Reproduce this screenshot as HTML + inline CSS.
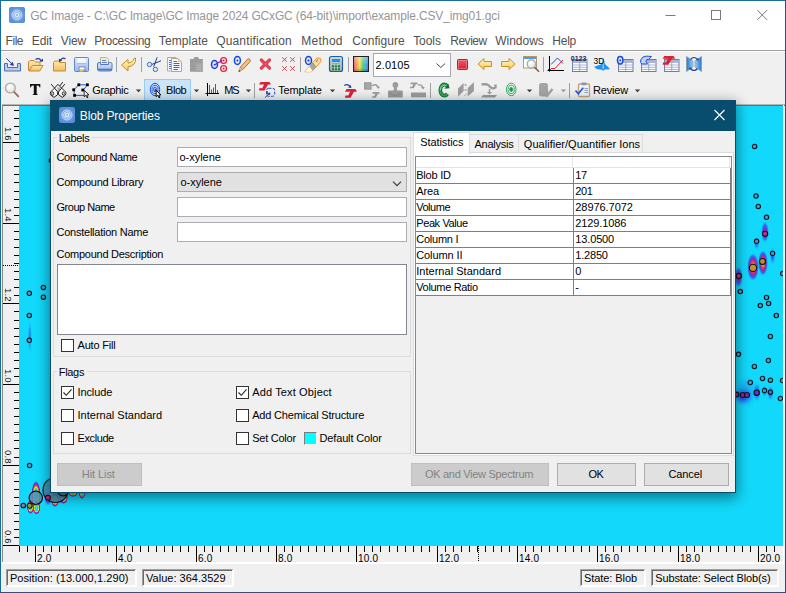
<!DOCTYPE html>
<html>
<head>
<meta charset="utf-8">
<title>GC Image</title>
<style>
*{box-sizing:border-box;margin:0;padding:0}
html,body{width:786px;height:593px;overflow:hidden;background:#f0f0f0}
body{font-family:"Liberation Sans",sans-serif;font-size:11px;color:#000;position:relative}
div,svg{position:absolute}
.t{white-space:nowrap}
.inp{background:#fff;border:1px solid #abadb3}
.cb{width:13px;height:13px;background:#fff;border:1px solid #333}
.btn{height:23px;border:1px solid #adadad;background:#e1e1e1}
.btn.dis{background:#cccccc;border-color:#bfbfbf}
.sep{width:2px;height:20px;border-left:1px solid #a0a0a0;border-right:1px solid #fff}
.st{height:18px;border:1px solid;border-width:1px 2px 2px 1px;border-color:#a0a0a0 #fff #fff #a0a0a0;box-shadow:inset 1px 1px 0 #696969}
</style>
</head>
<body>
<div style="left:0;top:0;width:786px;height:593px;background:#f0f0f0"></div>
<div style="left:0;top:0;width:786px;height:50px;background:#fff"></div>
<div style="left:0;top:0;width:786px;height:593px;border:1px solid;border-color:#166d9e #17589a #17589a #166d9e"></div>
<div class="t" style="left:30.2px;top:10px;font-size:12px;line-height:13.79px;letter-spacing:-0.15px;color:#969696;">GC Image - C:\GC Image\GC Image 2024 GCxGC (64-bit)\import\example.CSV_img01.gci</div>
<div class="t" style="left:5.5px;top:35px;font-size:12px;line-height:13.79px;letter-spacing:-0.43px;color:#505050;">File</div>
<div class="t" style="left:31.8px;top:35px;font-size:12px;line-height:13.79px;letter-spacing:-0.17px;color:#505050;">Edit</div>
<div class="t" style="left:60.8px;top:35px;font-size:12px;line-height:13.79px;letter-spacing:-0.12px;color:#505050;">View</div>
<div class="t" style="left:94.2px;top:35px;font-size:12px;line-height:13.79px;letter-spacing:-0.32px;color:#505050;">Processing</div>
<div class="t" style="left:158.8px;top:35px;font-size:12px;line-height:13.79px;letter-spacing:0.08px;color:#505050;">Template</div>
<div class="t" style="left:216.2px;top:35px;font-size:12px;line-height:13.79px;letter-spacing:0.16px;color:#505050;">Quantification</div>
<div class="t" style="left:301.2px;top:35px;font-size:12px;line-height:13.79px;letter-spacing:0.26px;color:#505050;">Method</div>
<div class="t" style="left:352.2px;top:35px;font-size:12px;line-height:13.79px;letter-spacing:0.06px;color:#505050;">Configure</div>
<div class="t" style="left:413.2px;top:35px;font-size:12px;line-height:13.79px;letter-spacing:-0.08px;color:#505050;">Tools</div>
<div class="t" style="left:450.2px;top:35px;font-size:12px;line-height:13.79px;letter-spacing:-0.46px;color:#505050;">Review</div>
<div class="t" style="left:495.2px;top:35px;font-size:12px;line-height:13.79px;letter-spacing:-0.01px;color:#505050;">Windows</div>
<div class="t" style="left:552.2px;top:35px;font-size:12px;line-height:13.79px;letter-spacing:-0.19px;color:#505050;">Help</div>
<svg style="left:660px;top:0" width="126" height="31" viewBox="0 0 126 31"><g stroke="#7a7a7a" stroke-width="1" fill="none"><path d="M5.5 15.5h10"/><rect x="51.5" y="10.5" width="9" height="9"/><path d="M97.200 10l10 10M107.200 10l-10 10"/></g></svg>
<div style="left:1px;top:50px;width:784px;height:1px;background:#a0a0a0"></div>
<div style="left:1px;top:51px;width:784px;height:1px;background:#fff"></div>
<svg style="left:0;top:52px" width="786" height="53" viewBox="0 52 786 53"><defs>
<linearGradient id="fold" x1="0" y1="0" x2="0" y2="1"><stop offset="0" stop-color="#fde9b0"/><stop offset="1" stop-color="#f3bd5e"/></linearGradient>
<linearGradient id="blu" x1="0" y1="0" x2="0" y2="1"><stop offset="0" stop-color="#dde8f8"/><stop offset="1" stop-color="#9bb8e4"/></linearGradient>
<linearGradient id="yel" x1="0" y1="0" x2="0" y2="1"><stop offset="0" stop-color="#fef6d4"/><stop offset="1" stop-color="#f8cc58"/></linearGradient>
<linearGradient id="rain" x1="0" y1="0" x2="1" y2="0"><stop offset="0" stop-color="#e8607c"/><stop offset=".22" stop-color="#f2a058"/><stop offset=".42" stop-color="#f2e050"/><stop offset=".62" stop-color="#58d070"/><stop offset=".8" stop-color="#48b0e8"/><stop offset="1" stop-color="#4878e8"/></linearGradient>
<linearGradient id="rainv" x1="0" y1="0" x2="0" y2="1"><stop offset="0" stop-color="#fff" stop-opacity=".35"/><stop offset=".6" stop-color="#fff" stop-opacity="0"/><stop offset="1" stop-color="#000" stop-opacity=".25"/></linearGradient>
<linearGradient id="redg" x1="0" y1="0" x2="0" y2="1"><stop offset="0" stop-color="#f0606c"/><stop offset="1" stop-color="#d81830"/></linearGradient>
<linearGradient id="flipL" x1="0" y1="0" x2="1" y2="0"><stop offset="0" stop-color="#1f78cc"/><stop offset="1" stop-color="#9ed0f4"/></linearGradient>
<linearGradient id="flipR" x1="1" y1="0" x2="0" y2="0"><stop offset="0" stop-color="#1f78cc"/><stop offset="1" stop-color="#9ed0f4"/></linearGradient>
<radialGradient id="lens" cx="40%" cy="35%" r="70%"><stop offset="0" stop-color="#fff"/><stop offset="1" stop-color="#d4e2ee"/></radialGradient>
<linearGradient id="calc" x1="0" y1="0" x2="0" y2="1"><stop offset="0" stop-color="#c8d8e0"/><stop offset="1" stop-color="#9cb0a8"/></linearGradient>
</defs><path d="M4.500 63.500h3v4h10v-4h3v7.500h-16z" fill="#bccbea" stroke="#4c6eb4" stroke-width="1"/><path d="M6.300 58.300l6.500 6.500" stroke="#2c44a4" stroke-width="1"/><path d="M14 66l-4.300-1.300 3-3z" fill="#2438a0"/><path d="M28.500 70.500v-8.500l1.500-1.500h4l1.500 1.500h4.500v3" fill="url(#fold)" stroke="#c48838" stroke-width="1"/><path d="M29 71l3.500-5.500h10.500l-3.200 5.500z" fill="url(#fold)" stroke="#c48838" stroke-width="1"/><path d="M35.500 59.500q3.500-2.500 6 1.800" fill="none" stroke="#1f3f8f" stroke-width="1.300"/><path d="M39.500 61.500h3.500v-3z" fill="#1f3f8f"/><path d="M53.500 62.500l1.200-1.500h4l1.300 1.500h5.500v8.500h-12z" fill="url(#fold)" stroke="#c48838" stroke-width="1"/><path d="M65.500 59q-3.300-2.200-5.300 1.600" fill="none" stroke="#1f3f8f" stroke-width="1.300"/><path d="M58.800 58.600l3.200 1.700-2.800 2.200z" fill="#1f3f8f"/><path d="M74.500 58.500q0-1 1-1h12q1 0 1 1v12q0 1-1 1h-12q-1 0-1-1z" fill="url(#blu)" stroke="#6486c2" stroke-width="1"/><rect x="77" y="58" width="9" height="6" fill="#f2f6fc"/><rect x="77" y="63" width="9" height="1" fill="#e8b060"/><rect x="78.500" y="66.500" width="7" height="5" fill="#6a8cc8"/><rect x="79.500" y="67.500" width="5" height="2" fill="#fff"/><rect x="79.500" y="69.500" width="4" height="2" fill="#e8d070"/><path d="M100.500 65v-7.500h6l2 2v5.500z" fill="#f4ead4" stroke="#c8b488" stroke-width="1"/><path d="M102 60.500h4M102 62.500h5" stroke="#5a82c4" stroke-width="1"/><path d="M97.500 64q0-1.500 1.500-1.500h1.500v2h8v-2h2q1.500 0 1.500 1.500v5q0 2-2 2h-10.500q-2 0-2-2z" fill="url(#blu)" stroke="#4f78c0" stroke-width="1"/><path d="M98 69.500h14" stroke="#4f78c0" stroke-width="1.500"/><path d="M121.500 65l6.500-5.500v3.500q4.500 0 6-4.500l1.500-0.500q1 7.500-7.500 9v4z" fill="url(#yel)" stroke="#c8901e" stroke-width="1" stroke-linejoin="round"/><path d="M157.200 57.300l-3.600 9.500M161 60.800l-9.600 3.800" stroke="#2a3a78" stroke-width="1" fill="none"/><circle cx="149.500" cy="64.500" r="2.200" fill="#d8e8f8" stroke="#3474c4" stroke-width="1"/><circle cx="155.400" cy="69.400" r="2.200" fill="#d8e8f8" stroke="#3474c4" stroke-width="1"/><path d="M167.500 57.500h8.500v13.500h-8.500z" fill="#fbf8ee" stroke="#c4ac74" stroke-width="1"/><path d="M169 60.500h3M169 62.500h3M169 64.500h3M169 66.500h3M169 68.500h3" stroke="#5070b8" stroke-width="1"/><path d="M171.500 58.500h6.500l3.500 3.500v9.500h-10z" fill="#f4f7fd" stroke="#b8a680" stroke-width="1"/><path d="M178 58.500v3.500h3.500z" fill="#e8c878"/><path d="M173.500 61.500h3.500M173.500 63.500h6M173.500 65.500h6M173.500 67.500h6M173.500 69.500h4.500" stroke="#4868b0" stroke-width="1"/><path d="M190 59h3.500l1-2h3.500l1 2h3.800v12.800h-12.800z" fill="#9c9c9c"/><rect x="195.500" y="63" width="7" height="8.800" fill="#a6a6a6"/><path d="M197 65.500h4M197 67.500h4M197 69.500h4" stroke="#b8b8b8" stroke-width=".8"/><ellipse cx="214.500" cy="64.500" rx="3" ry="4" fill="#d8e2fc" stroke="#1444e0" stroke-width="1.500"/><circle cx="223.600" cy="60.500" r="2.900" fill="#fff6f8" stroke="#e0203a" stroke-width="1.300"/><circle cx="223.600" cy="60.500" r="1" fill="#e0203a"/><circle cx="223.600" cy="68.500" r="2.900" fill="#fff6f8" stroke="#e0203a" stroke-width="1.300"/><circle cx="223.600" cy="68.500" r="1" fill="#e0203a"/><path d="M214.800 64.800l6.500-3.800" stroke="#8030b0" stroke-width="1.300"/><path d="M222.800 60.200l-2.800-.4 1.400 2.400z" fill="#8030b0"/><circle cx="214.500" cy="64.800" r=".8" fill="#2030c0"/><ellipse cx="237.400" cy="60.500" rx="3" ry="4" fill="#e0e8fc" stroke="#1444e0" stroke-width="1.500"/><circle cx="237.400" cy="60.500" r=".9" fill="#1030c0"/><path d="M240.300 67.200l7.500-8.200q1.200-.4 2 .4t.5 2l-7.500 8.200z" fill="#f4c088" stroke="#a86428" stroke-width=".9"/><path d="M240.300 67.200l2.500 2.400-4.200 2z" fill="#e8c8a0" stroke="#a86428" stroke-width=".5"/><path d="M239.600 69.900l1.300 1.100-2.500 1z" fill="#1f2f6f"/><path d="M261.300 60l8.200 8.200M269.500 60l-8.200 8.200" stroke="#e4384e" stroke-width="3.200" stroke-linecap="round"/><path d="M261.300 60l8.200 8.200M269.500 60l-8.200 8.200" stroke="#f07080" stroke-width="1" stroke-linecap="round" opacity=".6"/><path d="M282.2 57.300000000000004l4.600 4.600M286.8 57.300000000000004l-4.600 4.600" stroke="#d8304a" stroke-width=".9"/><path d="M282.2 66.2l4.600 4.600M286.8 66.2l-4.600 4.600" stroke="#d8304a" stroke-width=".9"/><path d="M290.2 57.300000000000004l4.600 4.600M294.8 57.300000000000004l-4.600 4.600" stroke="#d8304a" stroke-width=".9"/><path d="M290.2 66.2l4.600 4.600M294.8 66.2l-4.600 4.600" stroke="#d8304a" stroke-width=".9"/><ellipse cx="308.500" cy="60.500" rx="3" ry="4" fill="#dce6fc" stroke="#1444e0" stroke-width="1.500"/><circle cx="308.500" cy="60.500" r="1" fill="#1030c0"/><path d="M312.600 62.800l4.400-4.900 3.500 .6 .5 3-5.200 5.700z" fill="#f8e0a0" stroke="#e09028" stroke-width=".9" stroke-linejoin="round"/><path d="M309.700 66.300l2.900-3.500 3.200 4.400-3.200 3.500z" fill="#aca4ac" stroke="#907868" stroke-width=".6"/><path d="M305 70.500l4.700-4.200 2.900 4.400-1.100 1.300h-6.500z" fill="#fdf4c0" stroke="#e8b048" stroke-width=".6"/><path d="M306.500 71.500l3.500-3.500 1.500 2.300-1 1.200z" fill="#fffef4"/><circle cx="316.600" cy="61.200" r=".6" fill="#2848b0"/><circle cx="317.800" cy="60" r=".6" fill="#2848b0"/><rect x="329.500" y="56.500" width="13" height="15" rx="2" fill="url(#calc)" stroke="#1f5f9f" stroke-width="1.200"/><rect x="332" y="59" width="8" height="3" fill="#1f90f0"/><path d="M332.500 63.700h2M335 63.700h2M337.500 63.700h2" stroke="#78a888" stroke-width=".9"/><rect x="332" y="65.3" width="2" height="2" fill="#18803c"/><rect x="332" y="68.3" width="2" height="2" fill="#18803c"/><rect x="335" y="65.3" width="2" height="2" fill="#18803c"/><rect x="335" y="68.3" width="2" height="2" fill="#18803c"/><rect x="338" y="65.3" width="2" height="2" fill="#18803c"/><rect x="338" y="68.3" width="2" height="2" fill="#18803c"/><rect x="353.500" y="56.500" width="15" height="15" fill="url(#rain)" stroke="#222" stroke-width="1"/><rect x="354" y="57" width="14" height="14" fill="url(#rainv)"/><rect x="373.500" y="53.500" width="77" height="23" fill="#fff" stroke="#a8a8b4" stroke-width="1"/><path d="M436.500 63.500l4.300 4 4.300-4" fill="none" stroke="#444" stroke-width="1"/><rect x="457.500" y="59.500" width="10" height="10" rx=".8" fill="url(#redg)" stroke="#c81830" stroke-width="1"/><rect x="458.500" y="60.500" width="8" height="8" fill="none" stroke="#f89098" stroke-width=".6"/><path d="M478 64l6-5.500v3h7.500v5h-7.500v3z" fill="url(#yel)" stroke="#c8901e" stroke-width="1" stroke-linejoin="round"/><path d="M515 64l-6-5.500v3h-7.500v5h7.500v3z" fill="url(#yel)" stroke="#c8901e" stroke-width="1" stroke-linejoin="round"/><rect x="523.500" y="56.500" width="13" height="11.500" fill="#fff" stroke="#b09868" stroke-width="1"/><rect x="524" y="57" width="12" height="2" fill="#5098e8"/><circle cx="531.400" cy="64" r="4.200" fill="url(#lens)" stroke="#a8a8a8" stroke-width="1.300"/><path d="M534.800 67.500l3.800 3.800" stroke="#8a5a48" stroke-width="1.600" stroke-linecap="round"/><path d="M549.500 56v15.500M547.500 70.500h16.500" stroke="#000" stroke-width="1"/><path d="M548 69l1.500 2.500 1.500-2.500z" fill="#000"/><path d="M551 64.500l6.500-6.500 5.500 5.500" fill="none" stroke="#2050c0" stroke-width="1"/><path d="M551 68.500h4l8-8.500" fill="none" stroke="#e02030" stroke-width="1"/><rect x="572.5" y="59.5" width="14.5" height="12" fill="#fff" stroke="#6c7ca8" stroke-width="1"/><rect x="573.0" y="60.0" width="13.5" height="2" fill="#a8b4d0"/><path d="M572.5 62.5h14.5M572.5 65.0h14.5M572.5 67.3h14.5M572.5 69.5h14.5" stroke="#98a4c8" stroke-width=".8"/><path d="M579.75 62.5v9" stroke="#8894b8" stroke-width=".8"/><text x="570.800" y="61.300" font-family="Liberation Sans" font-weight="bold" font-size="6.800" fill="#182868" textLength="15.500" lengthAdjust="spacingAndGlyphs">0123</text><path d="M594 66.800q2-.3 3.500-1.300q3.500-.5 4.500-2.500q.8-2.500 1.300-5.200q.5 2.700 1.300 5.200q1 2.500 3 3.500q1.500 1.500 2.400 2.500q-1.500 .8-3.500 .3q-1.500 0-3.200 1.400q-1.700-1.400-3.800-1.200q-3 .2-5.500-2.700z" fill="#1f90f4"/><path d="M603.300 59.500q-.6 4-.8 8.500l.8 1.500 .8-1.500q-.2-4.500-.8-8.500z" fill="#90d0fc"/><text x="593.600" y="63.600" font-family="Liberation Sans" font-size="9.200" fill="#000" textLength="10.800" lengthAdjust="spacingAndGlyphs">3D</text><rect x="618.5" y="59.5" width="14.5" height="12" fill="#fff" stroke="#6c7ca8" stroke-width="1"/><rect x="619.0" y="60.0" width="13.5" height="2" fill="#a8b4d0"/><path d="M618.5 62.5h14.5M618.5 65.0h14.5M618.5 67.3h14.5M618.5 69.5h14.5" stroke="#98a4c8" stroke-width=".8"/><path d="M625.75 62.5v9" stroke="#8894b8" stroke-width=".8"/><ellipse cx="620.200" cy="60.300" rx="2.700" ry="3.700" fill="#d4defc" stroke="#1848e0" stroke-width="1.500"/><circle cx="620.200" cy="60.300" r=".9" fill="#1030c0"/><rect x="641.5" y="59.5" width="14.5" height="12" fill="#fff" stroke="#6c7ca8" stroke-width="1"/><rect x="642.0" y="60.0" width="13.5" height="2" fill="#a8b4d0"/><path d="M641.5 62.5h14.5M641.5 65.0h14.5M641.5 67.3h14.5M641.5 69.5h14.5" stroke="#98a4c8" stroke-width=".8"/><path d="M648.75 62.5v9" stroke="#8894b8" stroke-width=".8"/><path d="M640.500 62.500q-.5-3 2.500-5.500q3-1.500 8.500-.5l-3 3q-2.500-.5-2.500 2l1.500 2.500h-5.500z" fill="#c0d0f8" stroke="#2050d8" stroke-width="1"/><rect x="664.5" y="59.5" width="14.5" height="12" fill="#fff" stroke="#6c7ca8" stroke-width="1"/><rect x="665.0" y="60.0" width="13.5" height="2" fill="#a8b4d0"/><path d="M664.5 62.5h14.5M664.5 65.0h14.5M664.5 67.3h14.5M664.5 69.5h14.5" stroke="#98a4c8" stroke-width=".8"/><path d="M671.75 62.5v9" stroke="#8894b8" stroke-width=".8"/><path d="M664.25 56.00L673.52 56.00L675.06 58.68L671.97 58.68L668.37 64.86L662.70 64.86L663.01 62.49L666.10 62.49L667.85 58.68L662.70 58.68z" fill="#dc2038"/><path d="M686.500 56.500l6.500 4.500v6l-6.500 4.500z" fill="url(#flipL)" stroke="#8898a8" stroke-width=".7"/><path d="M701.500 56.500l-6.500 4.500v6l6.500 4.500z" fill="url(#flipR)" stroke="#8898a8" stroke-width=".7"/><path d="M690.500 59.500q3.500-4 7 0" fill="none" stroke="#1f3f8f" stroke-width="1.200"/><path d="M698.800 60.500l-2.600-.3 2.300-2.200z" fill="#1f3f8f"/><path d="M697.500 68.500q-3.500 4-7 0" fill="none" stroke="#1f3f8f" stroke-width="1.200"/><path d="M689.200 67.500l2.600.3-2.300 2.200z" fill="#1f3f8f"/><path d="M116.5 57v15" stroke="#a0a0a0" stroke-width="1"/><path d="M141.5 57v15" stroke="#a0a0a0" stroke-width="1"/><path d="M300.5 57v15" stroke="#a0a0a0" stroke-width="1"/><path d="M348.5 57v15" stroke="#a0a0a0" stroke-width="1"/><path d="M543.5 57v15" stroke="#a0a0a0" stroke-width="1"/><rect x="144.500" y="79.500" width="46" height="24" fill="#cce4f7" stroke="#9ccaf0" stroke-width="1"/><circle cx="10.400" cy="88" r="4.900" fill="url(#lens)" stroke="#b4ac98" stroke-width="1.400"/><path d="M14.300 92.200l4 4.200" stroke="#9a6a50" stroke-width="1.700" stroke-linecap="round"/><path d="M30 84h10.300v3.600h-.6q-.4-1.900-2-2.100h-1v8.100q0 .9 1.200 1v.5h-5.300v-.5q1.200-.1 1.200-1v-8.100h-1q-1.600.2-2 2.100h-.6z" fill="#111"/><g fill="none" stroke="#111" stroke-width=".9"><path d="M51.200 84.100l3.300 4M54.500 88.100l3.400-3.800 3.700 3.800M59.800 86l3-4M61.600 88.100l3.200-4"/><path d="M58.100 87.500v4.500M59.300 87.500v4.500" stroke="#555" stroke-width=".6"/><path d="M54.500 88.100l-3.900 3.900q-.7 1.500 .2 3l3.100 2.400 3.600-2.600q.7-1.500 0-3z" fill="#fff"/><path d="M61.700 88.100l3.900 3.900q.7 1.500-.2 3l-3.100 2.400-3.600-2.600q-.7-1.500 0-3z" fill="#fff"/><ellipse cx="52.700" cy="93.500" rx="1" ry="1.800" stroke-width=".8"/><ellipse cx="63.300" cy="93.500" rx="1" ry="1.800" stroke-width=".8"/><rect x="57.400" y="92.600" width="1.400" height="1.600" fill="#222" stroke="none"/></g><path d="M73.800 89.800l5-5h8.700l-4.500 5.500M74.200 90v5.400h10" fill="none" stroke="#2858c8" stroke-width="1"/><rect x="72.3" y="88.39999999999999" width="2.800" height="2.800" fill="#000"/><rect x="77.39999999999999" y="83.39999999999999" width="2.800" height="2.800" fill="#000"/><rect x="86.0" y="83.39999999999999" width="2.800" height="2.800" fill="#000"/><rect x="81.39999999999999" y="88.6" width="2.800" height="2.800" fill="#000"/><rect x="73.19999999999999" y="94.0" width="2.800" height="2.800" fill="#000"/><path d="M84.200 90.300v6.500l1.600-1.500 1.200 2.500 1-.5-1.200-2.400h2.200z" fill="#fff" stroke="#000" stroke-width=".8"/><path d="M135.8 89.500h5.400l-2.700 2.800z" fill="#3c3c3c"/><path d="M193.8 89.500h5.400l-2.700 2.800z" fill="#3c3c3c"/><path d="M245.8 89.500h5.400l-2.700 2.800z" fill="#3c3c3c"/><path d="M329.8 89.500h5.400l-2.700 2.800z" fill="#3c3c3c"/><path d="M526.8 89.500h5.400l-2.700 2.800z" fill="#3c3c3c"/><path d="M634.8 89.500h5.400l-2.700 2.800z" fill="#3c3c3c"/><path d="M560.8 89.500h5.400l-2.700 2.800z" fill="#9a9a9a"/><g fill="none" stroke="#1848e0"><ellipse cx="155" cy="89.500" rx="4.700" ry="6.200" stroke-width="1"/><ellipse cx="155" cy="89.500" rx="3" ry="4.200" stroke-width=".9"/><ellipse cx="155" cy="89.500" rx="1.400" ry="2.200" stroke-width=".9"/><circle cx="155.300" cy="89.800" r=".9" fill="#1030b0" stroke="none"/></g><path d="M156.200 90.300v6.500l1.600-1.500 1.200 2.500 1-.5-1.200-2.400h2.200z" fill="#fff" stroke="#000" stroke-width=".9"/><path d="M207.500 83v13M205.500 93.500h13.500" stroke="#000" stroke-width="1"/><path d="M209.500 85v8M213.500 87.500v5.500" stroke="#e02030" stroke-width="1"/><path d="M211.500 89.500v3.500M215.500 84v9M217.500 90v3" stroke="#2060d0" stroke-width="1"/><path d="M260.50 82.00L269.50 82.00L271.00 84.60L268.00 84.60L264.50 90.60L259.00 90.60L259.30 88.30L262.30 88.30L264.00 84.60L259.00 84.60z" fill="#dc2038"/><rect x="266.500" y="88.300" width="8.200" height="8" rx="2" fill="none" stroke="#2454c4" stroke-width="1" stroke-dasharray="3 1.200"/><path d="M265 97.600l4.200-4.100" stroke="#1f3f9f" stroke-width="1"/><circle cx="269.300" cy="93.400" r=".9" fill="#1f3f9f"/><path d="M267.300 91v3.200h3" fill="none" stroke="#1f3f9f" stroke-width=".9"/><path d="M346.50 89.10L355.50 89.10L357.00 91.70L354.00 91.70L350.50 97.70L345.00 97.70L345.30 95.40L348.30 95.40L350.00 91.70L345.00 91.70z" fill="#dc2038"/><path d="M344.300 85.500q3.300-2.300 5.800 1.200" fill="none" stroke="#1f3f9f" stroke-width="1.200"/><path d="M351.300 88l-3.200-.5 2.800-2.400z" fill="#1f3f9f"/><rect x="364" y="82.200" width="7.600" height="7.500" fill="#9c9c9c"/><rect x="365.500" y="83.500" width="4.600" height="4.800" fill="#a8a8a8"/><path d="M372 85.800q4.500-2.800 6 1.500" fill="none" stroke="#9c9c9c" stroke-width="1.400"/><path d="M376.200 86.500h3.800l-1.600 2.600z" fill="#9c9c9c"/><path d="M373.00 92.00L379.00 92.00L380.00 93.73L378.00 93.73L375.67 97.74L372.00 97.74L372.20 96.20L374.20 96.20L375.33 93.73L372.00 93.73z" fill="#9c9c9c"/><circle cx="395.400" cy="85" r="2.900" fill="#9c9c9c"/><path d="M394.200 87h2.400l.6 3.500h4.300q1.300 0 1.300 1.300v5.700h-14.800v-5.700q0-1.300 1.300-1.300h4.300z" fill="#9c9c9c"/><path d="M389.500 93l6 3 6-3" stroke="#888" stroke-width=".9" fill="none"/><path d="M411.00 82.60L417.00 82.60L418.00 84.33L416.00 84.33L413.67 88.34L410.00 88.34L410.20 86.80L412.20 86.80L413.33 84.33L410.00 84.33z" fill="#9c9c9c"/><path d="M418 85q4-.8 4.800 2.300" fill="none" stroke="#9c9c9c" stroke-width="1.300"/><path d="M420.800 87h4l-1.800 2.600z" fill="#9c9c9c"/><rect x="411" y="92.500" width="15" height="4.800" fill="#9c9c9c"/><path d="M447.300 86.300A4 5.600 0 1 0 447.300 93.900" fill="none" stroke="#0f6a2c" stroke-width="3.800"/><path d="M447.300 86.300A4 5.600 0 1 0 447.300 93.900" fill="none" stroke="#38a05c" stroke-width="2.200"/><path d="M446.500 86.500A3.800 5.200 0 0 0 440.300 90" fill="none" stroke="#a0e0b4" stroke-width=".9"/><path d="M444.300 88.800l5.200-.6-1-4.200z" fill="#0f6a2c"/><path d="M458 96.700v-8.200l5.600-5.600v8.200z" fill="#9c9c9c"/><path d="M467.700 96.500v-8.500l6.200-5.900v8.900z" fill="#9c9c9c"/><path d="M465.600 83.800v2.400M464.400 85h2.400M464.600 89l2 2M466.600 89l-2 2M464.600 95.800l2-2.300" stroke="#9c9c9c" stroke-width=".8"/><path d="M481.500 84.200h4.500q2.500 .3 4 2.500q2 2.500 5.500 .8v-3" fill="none" stroke="#9c9c9c" stroke-width="2.400"/><path d="M489.500 89v3.500" stroke="#9c9c9c" stroke-width="1.400"/><path d="M487 92h5l-2.500 2.600z" fill="#9c9c9c"/><path d="M483 95h14l-2 2.400h-14z" fill="#9c9c9c"/><g fill="none" stroke="#2aa45a"><ellipse cx="511.200" cy="89.400" rx="4.800" ry="6.300" stroke-width=".9"/><ellipse cx="511.200" cy="89.400" rx="3.100" ry="4.200" stroke-width=".9"/><ellipse cx="511.200" cy="89.400" rx="1.400" ry="2" stroke-width="1" fill="#1f8f48"/></g><rect x="539" y="83" width="9" height="13.500" rx="2.500" fill="#a4a4a4"/><path d="M544.500 93l2.500 2.500 5.500-6.500" fill="none" stroke="#a4a4a4" stroke-width="2.600"/><rect x="578.500" y="84" width="11" height="12.500" rx="1" fill="#edf2fa" stroke="#c8a070" stroke-width="1.300"/><rect x="581.500" y="82.500" width="5" height="2.800" rx=".8" fill="#8898b0"/><path d="M584.500 88.500h3.500M584.500 90.500h3.500M584.500 92.500h3.500" stroke="#7888b0" stroke-width=".8"/><path d="M575.500 90.500l2.800 3.300 5-6" fill="none" stroke="#1f58e0" stroke-width="1.700"/><path d="M254.5 83v15" stroke="#a0a0a0" stroke-width="1"/><path d="M430.5 83v15" stroke="#a0a0a0" stroke-width="1"/><path d="M569.5 83v15" stroke="#a0a0a0" stroke-width="1"/></svg>
<div class="t" style="left:375.5px;top:59px;font-size:11px;line-height:12.64px;letter-spacing:0.11px;color:#000;">2.0105</div>
<div class="t" style="left:92.2px;top:84px;font-size:11px;line-height:12.64px;letter-spacing:-0.33px;color:#000;">Graphic</div>
<div class="t" style="left:166.0px;top:84px;font-size:11px;line-height:12.64px;letter-spacing:-0.43px;color:#000;">Blob</div>
<div class="t" style="left:224.3px;top:84px;font-size:11px;line-height:12.64px;letter-spacing:-1.25px;color:#000;">MS</div>
<div class="t" style="left:278.2px;top:84px;font-size:11px;line-height:12.64px;letter-spacing:-0.12px;color:#000;">Template</div>
<div class="t" style="left:593.0px;top:84px;font-size:11px;line-height:12.64px;letter-spacing:-0.19px;color:#000;">Review</div>
<div style="left:2px;top:104px;width:783px;height:1px;background:#bab4b2"></div>
<div style="left:2px;top:105px;width:783px;height:1px;background:#726c6a"></div>
<div style="left:2px;top:105px;width:1px;height:459px;background:#8a8a8a"></div>
<div style="left:783px;top:105px;width:1px;height:459px;background:#fff"></div>
<div style="left:2px;top:562px;width:782px;height:2px;background:#fff"></div>
<div id="cy" style="left:19px;top:106px;width:764px;height:440px;background:#12d9fb;overflow:hidden"><svg style="left:0;top:0" width="764" height="440" viewBox="19 106 764 440"><defs>
<radialGradient id="gB"><stop offset="0" stop-color="#2848e8" stop-opacity=".95"/><stop offset=".5" stop-color="#2060f0" stop-opacity=".6"/><stop offset="1" stop-color="#12b0fb" stop-opacity="0"/></radialGradient>
<radialGradient id="gP"><stop offset="0" stop-color="#b02080"/><stop offset=".35" stop-color="#8828c0"/><stop offset=".65" stop-color="#2858f0" stop-opacity=".8"/><stop offset="1" stop-color="#12b0fb" stop-opacity="0"/></radialGradient>
<radialGradient id="gO"><stop offset="0" stop-color="#70d040"/><stop offset=".15" stop-color="#e8c020"/><stop offset=".3" stop-color="#e87020"/><stop offset=".45" stop-color="#d02870"/><stop offset=".62" stop-color="#8030c8"/><stop offset=".8" stop-color="#2858f0" stop-opacity=".75"/><stop offset="1" stop-color="#12b0fb" stop-opacity="0"/></radialGradient>
<radialGradient id="gR"><stop offset="0" stop-color="#12d9fb"/><stop offset=".42" stop-color="#12d9fb"/><stop offset=".5" stop-color="#40e060"/><stop offset=".58" stop-color="#f0f020"/><stop offset=".66" stop-color="#f06020"/><stop offset=".75" stop-color="#d020a0"/><stop offset=".85" stop-color="#6030d0"/><stop offset=".93" stop-color="#2060f0" stop-opacity=".7"/><stop offset="1" stop-color="#12b0fb" stop-opacity="0"/></radialGradient>
</defs><ellipse cx="765" cy="232" rx="4" ry="11" fill="url(#gP)"/><ellipse cx="756.6" cy="243" rx="3" ry="7" fill="url(#gB)"/><ellipse cx="772.6" cy="256" rx="3" ry="9" fill="url(#gB)"/><ellipse cx="763" cy="263" rx="5" ry="13" fill="url(#gO)"/><ellipse cx="753" cy="267" rx="6" ry="14" fill="url(#gO)"/><ellipse cx="738.5" cy="277" rx="4.5" ry="11" fill="url(#gP)"/><ellipse cx="746" cy="392" rx="14" ry="17" fill="url(#gB)" opacity=".4"/><ellipse cx="743" cy="396" rx="11" ry="10" fill="url(#gB)"/><ellipse cx="743" cy="397" rx="7" ry="6" fill="url(#gB)"/><ellipse cx="757" cy="392" rx="4" ry="10" fill="url(#gB)"/><ellipse cx="770.5" cy="393" rx="3.5" ry="8" fill="url(#gB)"/><ellipse cx="764.5" cy="391" rx="3" ry="6" fill="url(#gB)"/><circle cx="754.6" cy="146.4" r="2.2" fill="#3aa6c6" stroke="#06141c" stroke-width="1.1"/><circle cx="756" cy="196" r="2.2" fill="#3aa6c6" stroke="#06141c" stroke-width="1.1"/><circle cx="758.3" cy="206.4" r="2.2" fill="#3aa6c6" stroke="#06141c" stroke-width="1.1"/><circle cx="766.5" cy="217.3" r="2.2" fill="#3aa6c6" stroke="#06141c" stroke-width="1.1"/><circle cx="782.7" cy="273.6" r="2.2" fill="#3aa6c6" stroke="#06141c" stroke-width="1.1"/><circle cx="740.3" cy="291.6" r="2.2" fill="#3aa6c6" stroke="#06141c" stroke-width="1.1"/><circle cx="766.5" cy="297.5" r="2.2" fill="#3aa6c6" stroke="#06141c" stroke-width="1.1"/><circle cx="768.6" cy="303.4" r="2.2" fill="#3aa6c6" stroke="#06141c" stroke-width="1.1"/><circle cx="760.3" cy="305.6" r="2.2" fill="#3aa6c6" stroke="#06141c" stroke-width="1.1"/><circle cx="776.3" cy="315.5" r="2.2" fill="#3aa6c6" stroke="#06141c" stroke-width="1.1"/><circle cx="770.4" cy="336.4" r="2.2" fill="#3aa6c6" stroke="#06141c" stroke-width="1.1"/><circle cx="738.5" cy="354.3" r="2.2" fill="#3aa6c6" stroke="#06141c" stroke-width="1.1"/><circle cx="768.4" cy="360.5" r="2.2" fill="#3aa6c6" stroke="#06141c" stroke-width="1.1"/><circle cx="754.4" cy="366.4" r="2.2" fill="#3aa6c6" stroke="#06141c" stroke-width="1.1"/><circle cx="762.5" cy="378.4" r="2.2" fill="#3aa6c6" stroke="#06141c" stroke-width="1.1"/><circle cx="770.4" cy="380.2" r="2.2" fill="#3aa6c6" stroke="#06141c" stroke-width="1.1"/><circle cx="782.6" cy="380.5" r="2.2" fill="#3aa6c6" stroke="#06141c" stroke-width="1.1"/><circle cx="750.3" cy="382.5" r="2.2" fill="#3aa6c6" stroke="#06141c" stroke-width="1.1"/><circle cx="764.5" cy="390.6" r="2.2" fill="#3aa6c6" stroke="#06141c" stroke-width="1.1"/><circle cx="780.4" cy="398.4" r="2.2" fill="#3aa6c6" stroke="#06141c" stroke-width="1.1"/><circle cx="756.6" cy="241.3" r="2.2" fill="#6c8cd4" stroke="#06141c" stroke-width="1.1"/><circle cx="772.6" cy="253.4" r="2.2" fill="#4c98cc" stroke="#06141c" stroke-width="1.1"/><circle cx="770.4" cy="392.2" r="2.2" fill="#4c70c4" stroke="#06141c" stroke-width="1.1"/><circle cx="765.1" cy="233.8" r="2.6" fill="#c03088" stroke="#06141c" stroke-width="1.1"/><circle cx="762.5" cy="261.5" r="3" fill="#b89028" stroke="#06141c" stroke-width="1.1"/><circle cx="753" cy="267.9" r="3.6" fill="#cc9020" stroke="#06141c" stroke-width="1.1"/><circle cx="738.8" cy="276" r="2.6" fill="#c42c80" stroke="#06141c" stroke-width="1.1"/><circle cx="756.7" cy="392.7" r="2.7" fill="#7a2cb8" stroke="#06141c" stroke-width="1.1"/><circle cx="736.5" cy="394.5" r="2.4" fill="#8428ac" stroke="#06141c" stroke-width="1.1"/><circle cx="742.7" cy="395" r="2.5" fill="#94209c" stroke="#06141c" stroke-width="1.1"/><circle cx="747" cy="395" r="2.5" fill="#8c26a8" stroke="#06141c" stroke-width="1.1"/><ellipse cx="29.8" cy="337" rx="2.2" ry="17" fill="url(#gB)" opacity=".7"/><circle cx="51.4" cy="160.4" r="2.2" fill="#3aa6c6" stroke="#06141c" stroke-width="1.1"/><circle cx="29.3" cy="293.3" r="2.2" fill="#3aa6c6" stroke="#06141c" stroke-width="1.1"/><circle cx="43.4" cy="287.4" r="2.2" fill="#3aa6c6" stroke="#06141c" stroke-width="1.1"/><circle cx="43.4" cy="297.2" r="2.2" fill="#3aa6c6" stroke="#06141c" stroke-width="1.1"/><circle cx="29.3" cy="315.4" r="2.2" fill="#3aa6c6" stroke="#06141c" stroke-width="1.1"/><circle cx="29.3" cy="340.3" r="2.2" fill="#3aa6c6" stroke="#06141c" stroke-width="1.1"/><circle cx="29.6" cy="465.5" r="2.2" fill="#3aa6c6" stroke="#06141c" stroke-width="1.1"/><ellipse cx="36" cy="496" rx="4.8" ry="15" fill="url(#gR)"/><ellipse cx="30.5" cy="507" rx="3.6" ry="7" fill="url(#gR)"/><ellipse cx="36.5" cy="508" rx="3.8" ry="6.5" fill="url(#gR)"/><ellipse cx="48" cy="498" rx="4" ry="8" fill="url(#gP)"/><ellipse cx="55" cy="500" rx="4" ry="7" fill="url(#gR)"/><ellipse cx="63.5" cy="497" rx="4.5" ry="7" fill="url(#gR)"/><ellipse cx="73" cy="492" rx="5" ry="5" fill="url(#gR)"/><ellipse cx="82" cy="492" rx="3.5" ry="7" fill="url(#gR)"/><ellipse cx="100" cy="490" rx="3" ry="4" fill="url(#gP)"/><ellipse cx="128" cy="489" rx="3" ry="3.5" fill="url(#gP)"/><circle cx="55.5" cy="490" r="12.5" fill="#4c88a4" fill-opacity=".82" stroke="#06141c" stroke-width="1.2"/><circle cx="63" cy="490.5" r="5.5" fill="#5a7890" stroke="#06141c" stroke-width="1.1"/><circle cx="35.8" cy="497.8" r="6.7" fill="#5c8cac" fill-opacity=".8" stroke="#06141c" stroke-width="1.2"/><circle cx="23.3" cy="505.5" r="2.3" fill="#5c8cb4" stroke="#06141c" stroke-width="1.1"/><circle cx="29.7" cy="505.7" r="2.5" fill="#8c9c40" stroke="#06141c" stroke-width="1.1"/><circle cx="47.9" cy="497.8" r="2.5" fill="#c02070" stroke="#06141c" stroke-width="1.1"/></svg></div>
<svg style="left:0;top:100px" width="20" height="465" viewBox="0 100 20 465" shape-rendering="crispEdges"><g stroke="#000" stroke-width="1"><path d="M14 110.5H19"/><path d="M14 118.5H19"/><path d="M14 126.5H19"/><path d="M14 134.5H19"/><path d="M3 142.5H19"/><path d="M14 150.5H19"/><path d="M14 158.5H19"/><path d="M14 166.5H19"/><path d="M14 174.5H19"/><path d="M14 182.5H19"/><path d="M14 191.5H19"/><path d="M14 199.5H19"/><path d="M14 207.5H19"/><path d="M14 215.5H19"/><path d="M3 223.5H19"/><path d="M14 231.5H19"/><path d="M14 239.5H19"/><path d="M14 247.5H19"/><path d="M14 255.5H19"/><path d="M14 263.5H19"/><path d="M14 271.5H19"/><path d="M14 279.5H19"/><path d="M14 287.5H19"/><path d="M14 295.5H19"/><path d="M3 303.5H19"/><path d="M14 311.5H19"/><path d="M14 320.5H19"/><path d="M14 328.5H19"/><path d="M14 336.5H19"/><path d="M14 344.5H19"/><path d="M14 352.5H19"/><path d="M14 360.5H19"/><path d="M14 368.5H19"/><path d="M14 376.5H19"/><path d="M3 384.5H19"/><path d="M14 392.5H19"/><path d="M14 400.5H19"/><path d="M14 408.5H19"/><path d="M14 416.5H19"/><path d="M14 424.5H19"/><path d="M14 432.5H19"/><path d="M14 440.5H19"/><path d="M14 448.5H19"/><path d="M14 457.5H19"/><path d="M3 465.5H19"/><path d="M14 473.5H19"/><path d="M14 481.5H19"/><path d="M14 489.5H19"/><path d="M14 497.5H19"/><path d="M14 505.5H19"/><path d="M14 513.5H19"/><path d="M14 521.5H19"/><path d="M14 529.5H19"/><path d="M14 537.5H19"/><path d="M3 545.5H19"/></g></svg>
<div class="t" style="left:13px;top:127px;font-size:9.5px;line-height:9.5px;letter-spacing:.2px;transform-origin:0 0;transform:rotate(90deg);color:#111">1.6</div>
<div class="t" style="left:13px;top:208px;font-size:9.5px;line-height:9.5px;letter-spacing:.2px;transform-origin:0 0;transform:rotate(90deg);color:#111">1.4</div>
<div class="t" style="left:13px;top:288px;font-size:9.5px;line-height:9.5px;letter-spacing:.2px;transform-origin:0 0;transform:rotate(90deg);color:#111">1.2</div>
<div class="t" style="left:13px;top:369px;font-size:9.5px;line-height:9.5px;letter-spacing:.2px;transform-origin:0 0;transform:rotate(90deg);color:#111">1.0</div>
<div class="t" style="left:13px;top:450px;font-size:9.5px;line-height:9.5px;letter-spacing:.2px;transform-origin:0 0;transform:rotate(90deg);color:#111">0.8</div>
<div class="t" style="left:13px;top:530px;font-size:9.5px;line-height:9.5px;letter-spacing:.2px;transform-origin:0 0;transform:rotate(90deg);color:#111">0.6</div>
<svg style="left:0;top:545px" width="786" height="20" viewBox="0 545 786 20" shape-rendering="crispEdges"><g stroke="#000" stroke-width="1"><path d="M19.5 546V552"/><path d="M27.5 546V552"/><path d="M35.5 546V562"/><path d="M43.5 546V552"/><path d="M51.5 546V552"/><path d="M59.5 546V552"/><path d="M67.5 546V552"/><path d="M75.5 546V552"/><path d="M83.5 546V552"/><path d="M91.5 546V552"/><path d="M99.5 546V552"/><path d="M107.5 546V552"/><path d="M116.5 546V562"/><path d="M124.5 546V552"/><path d="M132.5 546V552"/><path d="M140.5 546V552"/><path d="M148.5 546V552"/><path d="M156.5 546V552"/><path d="M164.5 546V552"/><path d="M172.5 546V552"/><path d="M180.5 546V552"/><path d="M188.5 546V552"/><path d="M196.5 546V562"/><path d="M204.5 546V552"/><path d="M212.5 546V552"/><path d="M220.5 546V552"/><path d="M228.5 546V552"/><path d="M236.5 546V552"/><path d="M244.5 546V552"/><path d="M252.5 546V552"/><path d="M260.5 546V552"/><path d="M268.5 546V552"/><path d="M276.5 546V562"/><path d="M284.5 546V552"/><path d="M292.5 546V552"/><path d="M300.5 546V552"/><path d="M308.5 546V552"/><path d="M316.5 546V552"/><path d="M324.5 546V552"/><path d="M332.5 546V552"/><path d="M340.5 546V552"/><path d="M348.5 546V552"/><path d="M356.5 546V562"/><path d="M364.5 546V552"/><path d="M372.5 546V552"/><path d="M380.5 546V552"/><path d="M389.5 546V552"/><path d="M397.5 546V552"/><path d="M405.5 546V552"/><path d="M413.5 546V552"/><path d="M421.5 546V552"/><path d="M429.5 546V552"/><path d="M437.5 546V562"/><path d="M445.5 546V552"/><path d="M453.5 546V552"/><path d="M461.5 546V552"/><path d="M469.5 546V552"/><path d="M477.5 546V552"/><path d="M485.5 546V552"/><path d="M493.5 546V552"/><path d="M501.5 546V552"/><path d="M509.5 546V552"/><path d="M517.5 546V562"/><path d="M525.5 546V552"/><path d="M533.5 546V552"/><path d="M541.5 546V552"/><path d="M549.5 546V552"/><path d="M557.5 546V552"/><path d="M565.5 546V552"/><path d="M573.5 546V552"/><path d="M581.5 546V552"/><path d="M589.5 546V552"/><path d="M597.5 546V562"/><path d="M605.5 546V552"/><path d="M613.5 546V552"/><path d="M621.5 546V552"/><path d="M629.5 546V552"/><path d="M637.5 546V552"/><path d="M645.5 546V552"/><path d="M654.5 546V552"/><path d="M662.5 546V552"/><path d="M670.5 546V552"/><path d="M678.5 546V562"/><path d="M686.5 546V552"/><path d="M694.5 546V552"/><path d="M702.5 546V552"/><path d="M710.5 546V552"/><path d="M718.5 546V552"/><path d="M726.5 546V552"/><path d="M734.5 546V552"/><path d="M742.5 546V552"/><path d="M750.5 546V552"/><path d="M758.5 546V562"/><path d="M766.5 546V552"/><path d="M774.5 546V552"/></g></svg>
<div class="t" style="left:36.9px;top:553px;font-size:10px;line-height:11.49px;letter-spacing:0.30px;color:#000;">2.0</div>
<div class="t" style="left:117.9px;top:553px;font-size:10px;line-height:11.49px;letter-spacing:0.30px;color:#000;">4.0</div>
<div class="t" style="left:197.9px;top:553px;font-size:10px;line-height:11.49px;letter-spacing:0.30px;color:#000;">6.0</div>
<div class="t" style="left:277.9px;top:553px;font-size:10px;line-height:11.49px;letter-spacing:0.30px;color:#000;">8.0</div>
<div class="t" style="left:357.9px;top:553px;font-size:10px;line-height:11.49px;letter-spacing:0.23px;color:#000;">10.0</div>
<div class="t" style="left:438.9px;top:553px;font-size:10px;line-height:11.49px;letter-spacing:0.23px;color:#000;">12.0</div>
<div class="t" style="left:518.9px;top:553px;font-size:10px;line-height:11.49px;letter-spacing:0.23px;color:#000;">14.0</div>
<div class="t" style="left:598.9px;top:553px;font-size:10px;line-height:11.49px;letter-spacing:0.23px;color:#000;">16.0</div>
<div class="t" style="left:679.9px;top:553px;font-size:10px;line-height:11.49px;letter-spacing:0.23px;color:#000;">18.0</div>
<div class="t" style="left:759.9px;top:553px;font-size:10px;line-height:11.49px;letter-spacing:0.23px;color:#000;">20.0</div>
<svg style="left:0;top:100px" width="786" height="470" viewBox="0 100 786 470" shape-rendering="crispEdges"><path d="M3 265.5H19" stroke="#000" stroke-width="1" stroke-dasharray="1 1"/><path d="M478.5 546V562" stroke="#000" stroke-width="1" stroke-dasharray="1 1"/></svg>
<div class="st" style="left:6px;top:569px;width:131px"></div>
<div class="t" style="left:9.9px;top:572px;font-size:11px;line-height:12.64px;letter-spacing:0.08px;color:#000;">Position: (13.000,1.290)</div>
<div class="st" style="left:142px;top:569px;width:92px"></div>
<div class="t" style="left:146.1px;top:572px;font-size:11px;line-height:12.64px;letter-spacing:0.01px;color:#000;">Value: 364.3529</div>
<div class="st" style="left:580px;top:569px;width:66px"></div>
<div class="t" style="left:583.9px;top:572px;font-size:11px;line-height:12.64px;letter-spacing:-0.06px;color:#000;">State: Blob</div>
<div class="st" style="left:651px;top:569px;width:128px"></div>
<div class="t" style="left:655.2px;top:572px;font-size:11px;line-height:12.64px;letter-spacing:-0.11px;color:#000;">Substate: Select Blob(s)</div>
<div style="left:50px;top:100px;width:686px;height:393px;background:#f0f0f0;box-shadow:0 4px 13px 1px rgba(0,0,0,.46)"></div>
<div style="left:50px;top:100px;width:686px;height:31px;background:#084c6e"></div>
<div style="left:50px;top:131px;width:686px;height:362px;border:1px solid #084c6e;border-top:0"></div>
<div class="t" style="left:79.8px;top:110px;font-size:12px;line-height:13.79px;letter-spacing:-0.14px;color:#fff;">Blob Properties</div>
<svg style="left:710px;top:105px" width="20" height="20" viewBox="0 0 20 20"><path d="M4.5 5l10 10M14.5 5l-10 10" stroke="#fff" stroke-width="1.1" fill="none"/></svg>
<div style="left:53px;top:137px;width:358px;height:220px;border:1px solid #dcdcdc"></div>
<div style="left:57.3px;top:135px;width:35.0px;height:5px;background:#f0f0f0"></div>
<div class="t" style="left:58.8px;top:132px;font-size:11px;line-height:12.64px;letter-spacing:-0.30px;color:#000;">Labels</div>
<div style="left:53px;top:371px;width:358px;height:83px;border:1px solid #dcdcdc"></div>
<div style="left:57.3px;top:369px;width:29.700000000000003px;height:5px;background:#f0f0f0"></div>
<div class="t" style="left:58.8px;top:366px;font-size:11px;line-height:12.64px;letter-spacing:-0.32px;color:#000;">Flags</div>
<div class="t" style="left:56.5px;top:151px;font-size:11px;line-height:12.64px;letter-spacing:-0.43px;color:#000;">Compound Name</div>
<div class="t" style="left:56.5px;top:176px;font-size:11px;line-height:12.64px;letter-spacing:-0.24px;color:#000;">Compound Library</div>
<div class="t" style="left:56.5px;top:201px;font-size:11px;line-height:12.64px;letter-spacing:-0.47px;color:#000;">Group Name</div>
<div class="t" style="left:56.5px;top:226px;font-size:11px;line-height:12.64px;letter-spacing:-0.24px;color:#000;">Constellation Name</div>
<div class="t" style="left:56.5px;top:248px;font-size:11px;line-height:12.64px;letter-spacing:-0.26px;color:#000;">Compound Description</div>
<div class="inp" style="left:177px;top:147px;width:230px;height:20px"></div>
<div style="left:177px;top:172px;width:230px;height:20px;background:#e1e1e1;border:1px solid #adadad"></div>
<div class="inp" style="left:177px;top:197px;width:230px;height:20px"></div>
<div class="inp" style="left:177px;top:222px;width:230px;height:20px"></div>
<div class="t" style="left:179.5px;top:151px;font-size:11px;line-height:12.64px;letter-spacing:-0.03px;color:#000;">o-xylene</div>
<div class="t" style="left:180.5px;top:176px;font-size:11px;line-height:12.64px;letter-spacing:-0.03px;color:#000;">o-xylene</div>
<svg style="left:391px;top:178px" width="12" height="10" viewBox="0 0 12 10"><path d="M2 3.700l4 4 4-4" stroke="#3c3c3c" stroke-width="1.200" fill="none"/></svg>
<div class="inp" style="left:57px;top:264px;width:350px;height:71px;border-color:#828790"></div>
<div class="cb" style="left:61px;top:339px"></div>
<div class="t" style="left:77.5px;top:339px;font-size:11px;line-height:12.64px;letter-spacing:-0.20px;color:#000;">Auto Fill</div>
<div class="cb" style="left:61px;top:386px"></div>
<svg style="left:61px;top:386px" width="13" height="13" viewBox="0 0 13 13"><path d="M2.5 6.5l2.8 2.8 5.2-6" stroke="#222" stroke-width="1.1" fill="none"/></svg>
<div class="t" style="left:77.5px;top:386px;font-size:11px;line-height:12.64px;letter-spacing:-0.12px;color:#000;">Include</div>
<div class="cb" style="left:61px;top:409px"></div>
<div class="t" style="left:77.5px;top:409px;font-size:11px;line-height:12.64px;letter-spacing:0.01px;color:#000;">Internal Standard</div>
<div class="cb" style="left:61px;top:432px"></div>
<div class="t" style="left:77.5px;top:432px;font-size:11px;line-height:12.64px;letter-spacing:-0.40px;color:#000;">Exclude</div>
<div class="cb" style="left:236px;top:386px"></div>
<svg style="left:236px;top:386px" width="13" height="13" viewBox="0 0 13 13"><path d="M2.5 6.5l2.8 2.8 5.2-6" stroke="#222" stroke-width="1.1" fill="none"/></svg>
<div class="t" style="left:252.2px;top:386px;font-size:11px;line-height:12.64px;letter-spacing:0.14px;color:#000;">Add Text Object</div>
<div class="cb" style="left:236px;top:409px"></div>
<div class="t" style="left:252.2px;top:409px;font-size:11px;line-height:12.64px;letter-spacing:-0.19px;color:#000;">Add Chemical Structure</div>
<div class="cb" style="left:236px;top:432px"></div>
<div class="t" style="left:252.2px;top:432px;font-size:11px;line-height:12.64px;letter-spacing:-0.25px;color:#000;">Set Color</div>
<div style="left:304px;top:432px;width:13px;height:13px;background:#00ffff;border:1px solid;border-color:#7a7a7a #fff #fff #7a7a7a"></div>
<div class="t" style="left:319.5px;top:432px;font-size:11px;line-height:12.64px;letter-spacing:-0.15px;color:#000;">Default Color</div>
<div class="btn dis" style="left:57px;top:463px;width:85px"></div>
<div class="t" style="left:81.8px;top:468px;font-size:11px;line-height:12.64px;letter-spacing:-0.08px;color:#838383;">Hit List</div>
<div class="btn dis" style="left:411px;top:463px;width:138px"></div>
<div class="t" style="left:425.0px;top:468px;font-size:11px;line-height:12.64px;letter-spacing:-0.30px;color:#838383;">OK and View Spectrum</div>
<div class="btn" style="left:557px;top:463px;width:79px"></div>
<div class="t" style="left:588.5px;top:468px;font-size:11px;line-height:12.64px;letter-spacing:-0.65px;color:#000;">OK</div>
<div class="btn" style="left:644px;top:463px;width:85px"></div>
<div class="t" style="left:668.5px;top:468px;font-size:11px;line-height:12.64px;letter-spacing:-0.11px;color:#000;">Cancel</div>
<div style="left:413px;top:152px;width:321px;height:304px;border:1px solid #dcdcdc;background:#fff"></div>
<div style="left:469px;top:134px;width:50px;height:18px;border:1px solid #dcdcdc;border-bottom:0;border-left:0"></div>
<div style="left:518px;top:134px;width:125px;height:18px;border:1px solid #dcdcdc;border-bottom:0"></div>
<div style="left:413px;top:132px;width:57px;height:22px;border:1px solid #dcdcdc;border-bottom:0;background:#fff"></div>
<div class="t" style="left:420.2px;top:136px;font-size:11px;line-height:12.64px;letter-spacing:-0.08px;color:#000;">Statistics</div>
<div class="t" style="left:474.5px;top:138px;font-size:11px;line-height:12.64px;letter-spacing:-0.26px;color:#000;">Analysis</div>
<div class="t" style="left:523.8px;top:138px;font-size:11px;line-height:12.64px;letter-spacing:0.03px;color:#000;">Qualifier/Quantifier Ions</div>
<div style="left:415px;top:156px;width:317px;height:298px;border:1px solid #828790;background:#f0f0f0"></div>
<div style="left:416px;top:157px;width:315px;height:139px;background:#fff"></div>
<div style="left:572px;top:157px;width:1px;height:10px;background:#e4e4e4"></div>
<div style="left:729px;top:157px;width:1px;height:10px;background:#e4e4e4"></div>
<div style="left:416px;top:167px;width:315px;height:1px;background:#e4e4e4"></div>
<div style="left:416px;top:183px;width:315px;height:1px;background:#7f7f7f"></div>
<div style="left:416px;top:199px;width:315px;height:1px;background:#7f7f7f"></div>
<div style="left:416px;top:215px;width:315px;height:1px;background:#7f7f7f"></div>
<div style="left:416px;top:231px;width:315px;height:1px;background:#7f7f7f"></div>
<div style="left:416px;top:247px;width:315px;height:1px;background:#7f7f7f"></div>
<div style="left:416px;top:263px;width:315px;height:1px;background:#7f7f7f"></div>
<div style="left:416px;top:279px;width:315px;height:1px;background:#7f7f7f"></div>
<div style="left:416px;top:295px;width:315px;height:1px;background:#7f7f7f"></div>
<div style="left:573px;top:168px;width:1px;height:127px;background:#7f7f7f"></div>
<div style="left:730px;top:168px;width:1px;height:127px;background:#7f7f7f"></div>
<div class="t" style="left:416.2px;top:169px;font-size:11px;line-height:12.64px;letter-spacing:-0.21px;color:#000;">Blob ID</div>
<div class="t" style="left:575.3px;top:169px;font-size:11px;line-height:12.64px;letter-spacing:-0.37px;color:#000;">17</div>
<div class="t" style="left:416.2px;top:185px;font-size:11px;line-height:12.64px;letter-spacing:-0.08px;color:#000;">Area</div>
<div class="t" style="left:575.3px;top:185px;font-size:11px;line-height:12.64px;letter-spacing:-0.42px;color:#000;">201</div>
<div class="t" style="left:416.2px;top:201px;font-size:11px;line-height:12.64px;letter-spacing:-0.46px;color:#000;">Volume</div>
<div class="t" style="left:575.3px;top:201px;font-size:11px;line-height:12.64px;letter-spacing:-0.06px;color:#000;">28976.7072</div>
<div class="t" style="left:416.2px;top:217px;font-size:11px;line-height:12.64px;letter-spacing:-0.38px;color:#000;">Peak Value</div>
<div class="t" style="left:575.3px;top:217px;font-size:11px;line-height:12.64px;letter-spacing:-0.13px;color:#000;">2129.1086</div>
<div class="t" style="left:416.2px;top:233px;font-size:11px;line-height:12.64px;letter-spacing:-0.23px;color:#000;">Column I</div>
<div class="t" style="left:575.3px;top:233px;font-size:11px;line-height:12.64px;letter-spacing:-0.14px;color:#000;">13.0500</div>
<div class="t" style="left:416.2px;top:249px;font-size:11px;line-height:12.64px;letter-spacing:-0.10px;color:#000;">Column II</div>
<div class="t" style="left:575.3px;top:249px;font-size:11px;line-height:12.64px;letter-spacing:-0.19px;color:#000;">1.2850</div>
<div class="t" style="left:416.2px;top:265px;font-size:11px;line-height:12.64px;letter-spacing:0.03px;color:#000;">Internal Standard</div>
<div class="t" style="left:575.3px;top:265px;font-size:11px;line-height:12.64px;letter-spacing:-1.32px;color:#000;">0</div>
<div class="t" style="left:416.2px;top:281px;font-size:11px;line-height:12.64px;letter-spacing:-0.32px;color:#000;">Volume Ratio</div>
<div class="t" style="left:575.3px;top:281px;font-size:11px;line-height:12.64px;letter-spacing:-0.56px;color:#000;">-</div>
<svg style="left:9px;top:7px" width="16" height="16" viewBox="0 0 16 16"><defs><radialGradient id="aia" cx="50%" cy="50%" r="70%"><stop offset="0" stop-color="#7fb0ee"/><stop offset="1" stop-color="#4f84d3"/></radialGradient></defs><rect x="0" y="0" width="16" height="16" rx="2" fill="url(#aia)"/><g fill="none" stroke="#fff" stroke-opacity=".8"><circle cx="8" cy="8" r="1.6" stroke-width="1.2"/><circle cx="8" cy="8" r="3.4" stroke-width=".9"/><circle cx="8" cy="8" r="5" stroke-width=".8"/></g></svg>
<svg style="left:59px;top:107px" width="16" height="16" viewBox="0 0 16 16"><defs><radialGradient id="aib" cx="50%" cy="50%" r="70%"><stop offset="0" stop-color="#7fb0ee"/><stop offset="1" stop-color="#4f84d3"/></radialGradient></defs><rect x="0" y="0" width="16" height="16" rx="2" fill="url(#aib)"/><g fill="none" stroke="#fff" stroke-opacity=".8"><circle cx="8" cy="8" r="1.6" stroke-width="1.2"/><circle cx="8" cy="8" r="3.4" stroke-width=".9"/><circle cx="8" cy="8" r="5" stroke-width=".8"/></g></svg>
</body>
</html>
